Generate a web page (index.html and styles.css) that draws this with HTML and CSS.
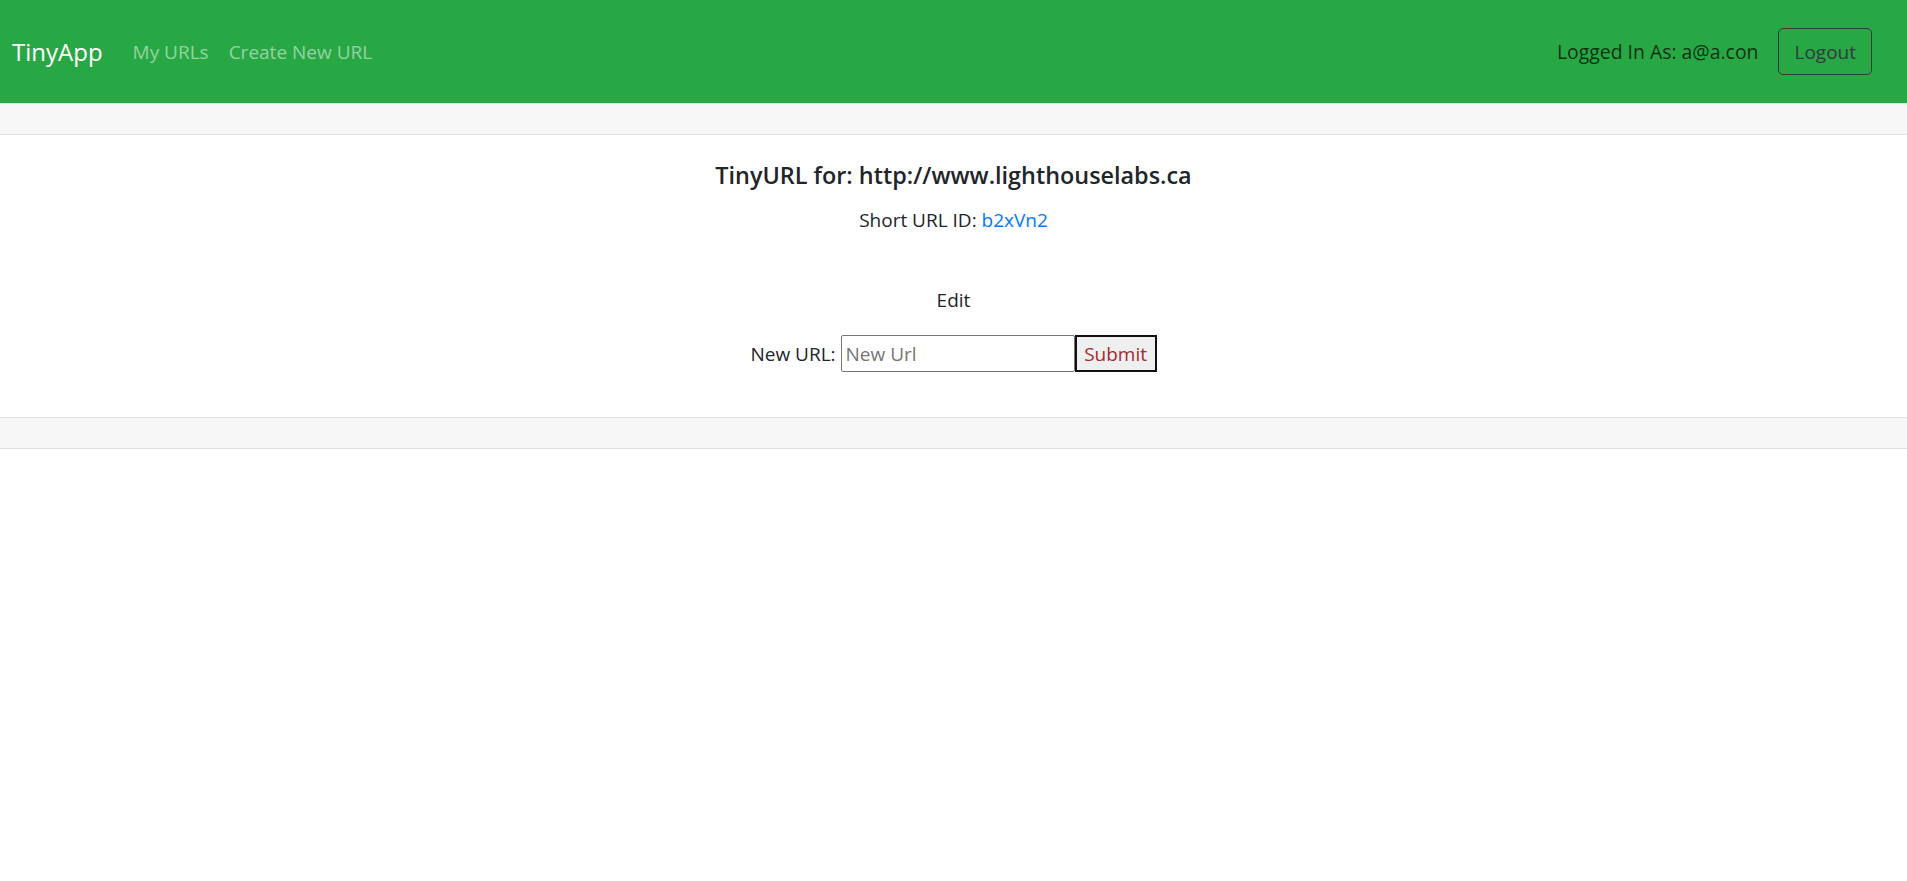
FILE: index.html
```html
<!DOCTYPE html>
<html lang="en">
<head>
<meta charset="utf-8">
<title>TinyApp</title>
<link rel="stylesheet" href="styles.css">
</head>
<body>
<nav class="navbar">
  <a class="brand" href="#">TinyApp</a>
  <div class="nav-links">
    <a class="nav-link" href="#">My URLs</a>
    <a class="nav-link" href="#">Create New URL</a>
  </div>
  <div class="nav-right">
    <span class="nav-text">Logged In As: a@a.con</span>
    <button class="btn-logout">Logout</button>
  </div>
</nav>
<div class="card">
  <div class="card-header"></div>
  <div class="card-body">
    <h5 class="card-title">TinyURL for: http://www.lighthouselabs.ca</h5>
    <p class="card-text">Short URL ID: <a href="#">b2xVn2</a></p>
    <p class="edit-label">Edit</p>
    <form class="edit-form">
      <label for="newurl">New URL:</label>
      <input id="newurl" type="text" placeholder="New Url"><button type="button" class="btn-submit">Submit</button>
    </form>
  </div>
  <div class="card-footer"></div>
</div>
</body>
</html>
```
FILE: styles.css
```css
* { box-sizing: border-box; }
body {
  margin: 0;
  font-family: "Open Sans", "Noto Sans", sans-serif;
  font-size: 19px;
  line-height: 30px;
  color: #212529;
  background: #fff;
}
a { text-decoration: none; }

.navbar {
  display: flex;
  align-items: center;
  height: 103px;
  padding: 0 35px 0 12px;
  background: #28a745;
}
.brand {
  color: #fff;
  font-size: 24px;
  margin-right: 20px;
}
.nav-links { display: flex; }
.nav-link {
  color: rgba(255,255,255,.5);
  padding: 0 10px;
}
.nav-right {
  margin-left: auto;
  display: flex;
  align-items: center;
  gap: 20px;
}
.nav-text { color: rgba(0,0,0,.72); font-size: 19.4px; }
.btn-logout {
  font-family: inherit;
  font-size: 19px;
  line-height: 30px;
  height: 47px;
  padding: 7px 15px;
  color: #343a40;
  background: transparent;
  border: 1px solid #343a40;
  border-radius: 5px;
}

.card {
  border-top: 1px solid #dfdfdf;
  border-bottom: 1px solid #dfdfdf;
}
.card-header {
  height: 31px;
  background: #f7f7f7;
  border-bottom: 1px solid #dfdfdf;
}
.card-body {
  padding: 25px 25px 45px;
  text-align: center;
}
.card-title {
  margin: 0 0 15px;
  font-size: 23.4px;
  font-weight: 600;
  line-height: 30px;
}
.card-text { margin: 0 0 50px; }
.card-text a { color: #007bff; }
.edit-label { margin: 0 0 20px; }
.edit-form {
  display: flex;
  justify-content: center;
  align-items: center;
  gap: 5px;
}
.edit-form input {
  width: 234px;
  height: 37px;
  font-family: inherit;
  font-size: 19px;
  padding: 0 4px;
  border: 1px solid #767676;
  border-radius: 2px;
  margin: 0;
}
.edit-form input::placeholder { color: #757575; }
.btn-submit {
  margin-left: -5px;
  height: 37px;
  width: 82px;
  font-family: inherit;
  font-size: 19px;
  color: #a52a2a;
  background: #efefef;
  border: 2px solid #111;
  padding: 0 5px;
}
.card-footer {
  height: 31px;
  background: #f7f7f7;
  border-top: 1px solid #dfdfdf;
}
```
